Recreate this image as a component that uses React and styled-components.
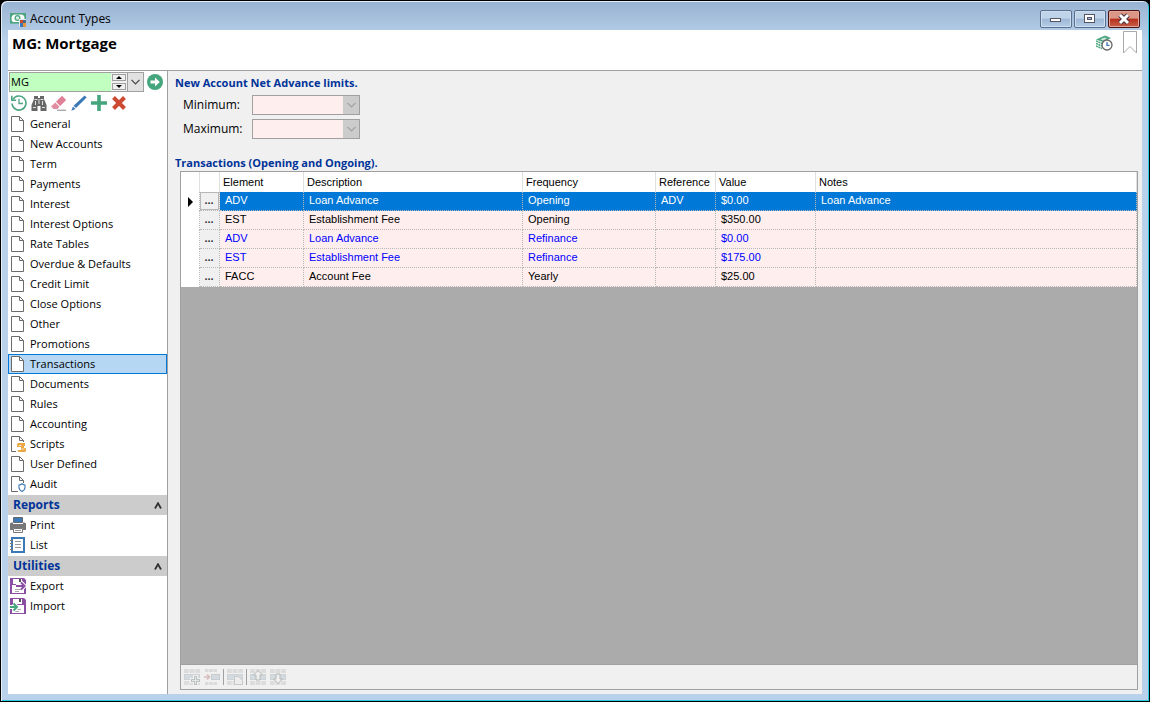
import React from 'react';
import styled, { createGlobalStyle } from 'styled-components';

const pages = [
  'General', 'New Accounts', 'Term', 'Payments', 'Interest', 'Interest Options',
  'Rate Tables', 'Overdue & Defaults', 'Credit Limit', 'Close Options', 'Other',
  'Promotions', 'Transactions', 'Documents', 'Rules', 'Accounting', 'Scripts',
  'User Defined', 'Audit',
];

const transactions = [
  { element: 'ADV', description: 'Loan Advance', frequency: 'Opening', reference: 'ADV', value: '$0.00', notes: 'Loan Advance', selected: true },
  { element: 'EST', description: 'Establishment Fee', frequency: 'Opening', value: '$350.00' },
  { element: 'ADV', description: 'Loan Advance', frequency: 'Refinance', value: '$0.00', linked: true },
  { element: 'EST', description: 'Establishment Fee', frequency: 'Refinance', value: '$175.00', linked: true },
  { element: 'FACC', description: 'Account Fee', frequency: 'Yearly', value: '$25.00' },
];

export default function App() {
  return (
    <>
      <GlobalStyle />
      <Window>
        <TitleBar>
          <MoneyIcon />
          <TitleText>Account Types</TitleText>
          <WindowButton aria-label='Minimise'>
            <svg width='12' height='12' viewBox='0 0 12 12'><rect x='.5' y='5.5' width='10' height='3' fill='#fff' stroke='#556' /></svg>
          </WindowButton>
          <WindowButton aria-label='Maximise'>
            <svg width='12' height='12' viewBox='0 0 12 12'>
              <rect x='.5' y='1.5' width='10' height='8' fill='#fff' stroke='#556' />
              <rect x='3.5' y='4.5' width='4' height='2' fill='#9fb9d6' stroke='#556' />
            </svg>
          </WindowButton>
          <WindowButton $close aria-label='Close'>
            <svg width='14' height='12' viewBox='0 0 14 12'>
              <path d='M3 2l8 8M11 2l-8 8' stroke='#4a3540' strokeWidth='5' />
              <path d='M3 2l8 8M11 2l-8 8' stroke='#fff' strokeWidth='3' />
            </svg>
          </WindowButton>
        </TitleBar>

        <Client>
          <Header>
            <h1>MG: Mortgage</h1>
            <HeaderButton aria-label='Pending transactions'><StackClockIcon /></HeaderButton>
            <HeaderButton aria-label='Bookmark'>
              <svg width='16' height='24' viewBox='0 0 16 24'><path d='M1.5 .5h13v21.5l-6.5-6.5l-6.5 6.5z' fill='#fff' stroke='#a9a9a9' /></svg>
            </HeaderButton>
          </Header>

          <Body>
            <Sidebar>
              <Lookup>
                <LookupBox>
                  <input aria-label='Account type' defaultValue='MG' />
                  <Spinner>
                    <button aria-label='Previous'><Triangle d='M3 0L6 3H0z' /></button>
                    <button aria-label='Next'><Triangle d='M0 0h6L3 3z' /></button>
                  </Spinner>
                  <DropButton aria-label='Open list'><Chevron color='#444' /></DropButton>
                </LookupBox>
                <IconButton aria-label='Go'>
                  <svg width='16' height='16' viewBox='0 0 16 16'>
                    <circle cx='8' cy='8' r='8' fill='#45a57d' />
                    <path d='M3.5 6.5H8V3.6L12.8 8L8 12.4V9.5H3.5z' fill='#fff' />
                  </svg>
                </IconButton>
              </Lookup>

              <Tools>
                <IconButton aria-label='History'>
                  <svg width='16' height='16' viewBox='0 0 16 16' fill='none' stroke='#4ca580' strokeWidth='1.6'>
                    <path d='M2 4.4A7 7 0 1 1 1 8.5' /><path d='M.8 .8v4.4h4.4' /><path d='M8 3.8v4.7h4' strokeWidth='1.3' />
                  </svg>
                </IconButton>
                <IconButton aria-label='Find'>
                  <svg width='16' height='16' viewBox='0 0 16 16'>
                    <path d='M3 1h4v2h2V1h4v3l2.5 6v6h-6v-5h-3v5h-6v-6L3 4z' fill='#676767' />
                    <path d='M3.5 4.5h3M9.5 4.5h3M4.5 6v4M11.5 6v4M2 12.5h3M11 12.5h3M8 4v5' stroke='#fff' strokeWidth='.8' />
                  </svg>
                </IconButton>
                <IconButton aria-label='Clear'>
                  <svg width='16' height='16' viewBox='0 0 16 16'>
                    <path d='M11 .8l4.2 4.2l-6 6L5 6.8z' fill='#df8096' /><path d='M4.3 7.5l4.2 4.2l-2 2.3H2.5L0 11.5z' fill='#e18ca0' />
                    <path d='M6 15.2h9' stroke='#888' />
                  </svg>
                </IconButton>
                <IconButton aria-label='Edit'>
                  <svg width='16' height='16' viewBox='0 0 16 16'>
                    <path d='M13.6 .5l2 2L5 13l-2.4-2.2z' fill='#3b78b8' /><path d='M2 11.5l2.5 2.4L.3 15.7z' fill='#3b78b8' />
                  </svg>
                </IconButton>
                <IconButton aria-label='Add'>
                  <svg width='16' height='16' viewBox='0 0 16 16'><path d='M8 0v16M0 8h16' stroke='#45a57d' strokeWidth='3.6' /></svg>
                </IconButton>
                <IconButton aria-label='Delete'>
                  <svg width='16' height='16' viewBox='0 0 16 16'><path d='M2.5 2.5l11 11M13.5 2.5l-11 11' stroke='#cb4a31' strokeWidth='4' /></svg>
                </IconButton>
              </Tools>

              <nav>
                {pages.map((page) => (
                  <NavItem key={page} href={'#' + page} $active={page === 'Transactions'}>
                    <PageIcon badge={page} />{page}
                  </NavItem>
                ))}
                <GroupHeading>Reports<Caret /></GroupHeading>
                <NavItem href='#print'><PrintIcon />Print</NavItem>
                <NavItem href='#list'><ListIcon />List</NavItem>
                <GroupHeading>Utilities<Caret /></GroupHeading>
                <NavItem href='#export'><DiskIcon arrow='#8a4fa3' d='M6 8h8.500M11 4.500L14.500 8L11 11.500' />Export</NavItem>
                <NavItem href='#import'><DiskIcon arrow='#45a57d' d='M0 9h7M3.500 5.500L7 9l-3.500 3.500' />Import</NavItem>
              </nav>
            </Sidebar>

            <Main>
              <h2>New Account Net Advance limits.</h2>
              <Limits>
                <Limit id='minimum' label='Minimum:' />
                <Limit id='maximum' label='Maximum:' />
              </Limits>
              <h2>Transactions (Opening and Ongoing).</h2>
              <GridPanel>
                <Grid>
                  <colgroup>
                    {[19, 20, 84, 219, 133, 60, 100].map((width, i) => <Column key={i} $width={width} />)}
                    <col />
                  </colgroup>
                  <thead>
                    <tr>
                      <th /><th />
                      <th>Element</th><th>Description</th><th>Frequency</th>
                      <th>Reference</th><th>Value</th><th>Notes</th>
                    </tr>
                  </thead>
                  <tbody>
                    {transactions.map((row, i) => (
                      <Row key={i} $selected={row.selected} $linked={row.linked}>
                        <Marker>
                          {row.selected && <svg width='5' height='10' viewBox='0 0 5 10'><path d='M0 0l5 5l-5 5z' /></svg>}
                        </Marker>
                        <MoreCell $selected={row.selected}><button aria-label='Details'>...</button></MoreCell>
                        <td>{row.element}</td>
                        <td>{row.description}</td>
                        <td>{row.frequency}</td>
                        <td>{row.reference}</td>
                        <td>{row.value}</td>
                        <td>{row.notes}</td>
                      </Row>
                    ))}
                  </tbody>
                </Grid>
                <GridTools>
                  <ToolGroup>
                    <IconButton disabled aria-label='Add row'>
                      <RowsIcon>
                        <path d='M11.500 6v10M6 11.500h10' stroke='#f0f0f0' strokeWidth='5' />
                        <path d='M11.500 7v9M7 11.500h9' stroke='#bcc2c2' strokeWidth='3' />
                        <path d='M11.500 8v7M8 11.500h7' stroke='#e4e6e6' />
                      </RowsIcon>
                    </IconButton>
                    <IconButton disabled aria-label='Insert row'>
                      <svg width='16' height='16' viewBox='0 0 16 16'>
                        <path d='M1 1.500h12M1 14.500h12' stroke='#dadada' strokeWidth='3' strokeDasharray='3.500 .8' />
                        <rect x='7.500' y='5.500' width='8' height='5' fill='#d3dbe0' stroke='#c6ccd0' />
                        <path d='M0 8h5M3 5.500L5.500 8L3 10.500' stroke='#d9bcbc' strokeWidth='1.600' fill='none' />
                      </svg>
                    </IconButton>
                  </ToolGroup>
                  <ToolGroup>
                    <IconButton disabled aria-label='Copy row'>
                      <RowsIcon><path d='M7.500 7.500h4l4 4v4h-8z' fill='#ececec' stroke='#c8c8c8' /></RowsIcon>
                    </IconButton>
                  </ToolGroup>
                  <ToolGroup>
                    <IconButton disabled aria-label='Move up'>
                      <RowsIcon><path d='M8 1.500L12.500 6H10v5H6V6H3.500z' fill='#f0f0f0' stroke='#b4b8b8' /></RowsIcon>
                    </IconButton>
                    <IconButton disabled aria-label='Move down'>
                      <RowsIcon><path d='M8 14.500L3.500 10H6V5h4v5h2.500z' fill='#f0f0f0' stroke='#b4b8b8' /></RowsIcon>
                    </IconButton>
                  </ToolGroup>
                </GridTools>
              </GridPanel>
            </Main>
          </Body>
        </Client>
      </Window>
    </>
  );
}

function Limit({ id, label }) {
  return (
    <>
      <label htmlFor={id}>{label}</label>
      <SelectBox>
        <select id={id} disabled><option></option></select>
        <span><Chevron color='#a0a0a0' /></span>
      </SelectBox>
    </>
  );
}

function Chevron({ color }) {
  return <svg width='9' height='6' viewBox='0 0 9 6'><path d='M.5 .8l4 4l4-4' fill='none' stroke={color} strokeWidth='1.2' /></svg>;
}

function Triangle({ d }) {
  return <svg width='6' height='3' viewBox='0 0 6 3'><path d={d} /></svg>;
}

function Caret() {
  return <svg width='8' height='7' viewBox='0 0 8 7'><path d='M1 6.500L4 1.200L7 6.500' fill='none' stroke='#333' strokeWidth='1.800' /></svg>;
}

function MoneyIcon() {
  return (
    <svg width='16' height='16' viewBox='0 0 16 16'>
      <rect x='.8' y='2.800' width='14.400' height='9' fill='#fff' stroke='#4ca580' strokeWidth='1.600' />
      <path d='M1 3h3L1 6zM15 3h-3l3 3zM1 12h3L1 9z' fill='#4ca580' />
      <circle cx='7.500' cy='7' r='2.400' fill='#d6eee3' stroke='#4ca580' strokeWidth='1.300' />
      <path d='M9 8h7v8H9z' fill='#dfe8f0' />
      <path d='M10 9h3v3h-3z' fill='#c84a2c' />
      <path d='M10 12h3v4h-3z' fill='#3b78b8' /><path d='M13 9h3v3h-3z' fill='#4a6a8c' />
      <path d='M13 12h3v4h-3z' fill='#e8943c' />
    </svg>
  );
}

function StackClockIcon() {
  return (
    <svg width='17' height='16' viewBox='0 0 17 16'>
      <path d='M0 4.500L9 .5l6 2.500L7 7z' fill='#4ca580' />
      <path d='M4.500 4.200l4-1.700l2.500 1.200l-4 1.700z' fill='#cfe8dc' />
      <path d='M0 6l6 2.500M0 8.500L6 11M0 11l6 2.500' stroke='#4ca580' strokeWidth='1.500' strokeDasharray='2 .6' />
      <circle cx='11' cy='10' r='5' fill='#fff' stroke='#666' strokeWidth='1.300' />
      <path d='M11 7v3.300h2.500' fill='none' stroke='#3b78b8' strokeWidth='1.300' />
    </svg>
  );
}

function PageIcon({ badge }) {
  return (
    <svg width='16' height='16' viewBox='0 0 16 16'>
      <path d='M1.500 .5h8l4 4v11h-12z' fill='#fff' stroke='#6b6b6b' />
      <path d='M9.500 .5v4h4' fill='none' stroke='#6b6b6b' />
      {badge === 'Scripts' && (
        <>
          <path d='M6 6h10v10H6z' fill='#fff' />
          <path d='M8.500 7H15v3h-1v2h2v2.500q0 1.500-1.500 1.500H9q-1.500 0-1.500-2H11v-3H7V8.500Q7 7 8.500 7z' fill='#e8a844' />
          <path d='M8.500 9.500h3M11.500 13h3' stroke='#fff' strokeWidth='.7' />
        </>
      )}
      {badge === 'Audit' && (
        <>
          <path d='M8 7h8v9H8z' fill='#fff' />
          <path d='M9 9q1.500 0 3-1.200q1.500 1.200 3 1.200v2.500q0 2.500-3 4q-3-1.500-3-4z' fill='#fff' stroke='#3b78b8' strokeWidth='1.100' />
        </>
      )}
    </svg>
  );
}

function PrintIcon() {
  return (
    <svg width='16' height='16' viewBox='0 0 16 16'>
      <path d='M3.500 .5h9v5h-9z' fill='#3b78b8' stroke='#666' />
      <path d='M0 7q0-1.500 1.500-1.500H3V7h10V5.500h1.500Q16 5.500 16 7v6h-3v-2H3v2H0z' fill='#777' />
      <path d='M3.500 11.500h9v4h-9z' fill='#fff' stroke='#777' />
      <path d='M5 13.500h6' stroke='#999' />
    </svg>
  );
}

function ListIcon() {
  return (
    <svg width='16' height='16' viewBox='0 0 16 16'>
      <path d='M2 1h12v14H2z' fill='#fff' stroke='#3b78b8' strokeWidth='2' />
      <path d='M0 3.500h3M0 6.500h3M0 9.500h3M0 12.500h3' stroke='#777' />
      <path d='M5 4.500h6M5 7.500h6M5 10.500h6' stroke='#999' />
    </svg>
  );
}

function DiskIcon({ arrow, d }) {
  return (
    <svg width='16' height='16' viewBox='0 0 16 16'>
      <path d='M0 0h14l2 2v14H0z' fill='#8a4fa3' />
      <path d='M3 1h9v5H3zM2 7h12v8H2z' fill='#fff' />
      <path d='M9 1h2v3H9z' fill='#555' />
      <path d='M5 11.500h6M5 13.500h4' stroke='#aaa' />
      <path d={d} fill='none' stroke='#fff' strokeWidth='4' />
      <path d={d} fill='none' stroke={arrow} strokeWidth='2' />
    </svg>
  );
}

function RowsIcon({ children }) {
  return (
    <svg width='16' height='16' viewBox='0 0 16 16'>
      <path d='M0 2h16M0 14h16' stroke='#dcdcdc' strokeWidth='4' strokeDasharray='4.800 .8' />
      <rect x='.5' y='5.500' width='15' height='5' fill='#d3dbe0' stroke='#cdd2d5' />
      {children}
    </svg>
  );
}

const GlobalStyle = createGlobalStyle`
  * { box-sizing: border-box; }
  body {
    margin: 0;
    background: #000;
    color: #000;
    font: 12px/16px "Open Sans", "Noto Sans", sans-serif;
  }
  button, input, select { font: inherit; color: inherit; margin: 0; }
  svg { flex: none; display: block; }
`;

const Window = styled.div`
  display: flex;
  flex-direction: column;
  min-height: 100vh;
  padding: 0 7px 7px;
  border: 1px solid #000;
  border-radius: 7px 7px 0 0;
  background: linear-gradient(#98b3d2, #b9d1ea 40px);
  box-shadow: inset 1px 1px #e4eef8, inset -1px -1px #25cfe0;
`;

const TitleBar = styled.header`
  display: flex;
  align-items: center;
  gap: 2px;
  height: 29px;
  padding: 7px 2px 0;
`;

const TitleText = styled.span`
  flex: 1;
  padding-left: 2px;
`;

const WindowButton = styled.button`
  display: flex;
  align-items: center;
  justify-content: center;
  width: 32px;
  height: 18px;
  padding: 0;
  border: 1px solid ${({ $close }) => ($close ? '#4c1212' : '#58708f')};
  border-radius: 2px;
  box-shadow: inset 0 0 0 1px ${({ $close }) => ($close ? '#e0a79c' : '#d0dfef')};
  background: ${({ $close }) => ($close
    ? 'linear-gradient(#dc9686 45%, #b7301c 50%, #c8604a)'
    : 'linear-gradient(#bfd3e9 45%, #9db8d6 50%, #b4cce6)')};
`;

const Client = styled.div`
  flex: 1;
  display: flex;
  flex-direction: column;
  background: #f0f0f0;
`;

const Header = styled.div`
  display: flex;
  align-items: flex-start;
  gap: 9px;
  height: 41px;
  padding: 0 4px;
  border-bottom: 1px solid #a0a0a0;
  background: #fff;

  h1 {
    flex: 1;
    margin: 0;
    font: bold 15px/26px "Open Sans", sans-serif;
  }
`;

const HeaderButton = styled.button`
  display: flex;
  align-items: center;
  height: 26px;
  padding: 0;
  border: 0;
  background: none;
`;

const Body = styled.div`
  flex: 1;
  display: flex;
`;

const Sidebar = styled.aside`
  flex: none;
  width: 160px;
  padding-top: 1px;
  border-right: 1px solid #a0a0a0;
  background: #fff;
  font-size: 11px;
`;

const Lookup = styled.div`
  display: flex;
  align-items: center;
  gap: 3px;
  padding-left: 1px;
`;

const LookupBox = styled.div`
  display: flex;
  width: 135px;
  height: 20px;
  border: 1px solid #a0a0a0;
  background: #c0ffc0;

  input {
    flex: 1;
    min-width: 0;
    padding: 0 1px;
    border: 0;
    background: none;
  }
`;

const Spinner = styled.div`
  display: grid;
  gap: 2px;
  width: 16px;
  padding: 1px;
  background: #f0f0f0;

  button {
    display: flex;
    align-items: center;
    justify-content: center;
    padding: 0;
    border: 1px solid #a0a0a0;
    background: #f0f0f0;
  }
`;

const DropButton = styled.button`
  display: flex;
  align-items: center;
  justify-content: center;
  width: 16px;
  padding: 0;
  border: 0;
  border-left: 1px solid #a0a0a0;
  background: #e1e1e1;
`;

const IconButton = styled.button`
  padding: 0;
  border: 0;
  background: none;
`;

const Tools = styled.div`
  display: flex;
  gap: 4px;
  padding: 3px 3px;
`;

const NavItem = styled.a`
  display: flex;
  align-items: center;
  gap: 4px;
  height: 20px;
  padding-left: 1px;
  border: 1px solid ${({ $active }) => ($active ? '#0078d7' : 'transparent')};
  background: ${({ $active }) => ($active ? '#b5d7f3' : 'none')};
  color: #000;
  text-decoration: none;
`;

const GroupHeading = styled.div`
  display: flex;
  align-items: center;
  justify-content: space-between;
  height: 20px;
  margin-top: 1px;
  padding: 0 5px;
  background: #ccc;
  color: #003399;
  font: bold 12px/16px "Open Sans", sans-serif;
`;

const Main = styled.main`
  flex: 1;
  display: flex;
  flex-direction: column;
  min-width: 0;
  padding: 4px 4px 4px 7px;

  h2 {
    margin: 0;
    color: #003399;
    font: bold 11px/16px "Open Sans", sans-serif;
  }
`;

const Limits = styled.div`
  display: grid;
  grid-template-columns: 69px 108px;
  row-gap: 4px;
  align-items: center;
  padding: 4px 0 16px 8px;
`;

const SelectBox = styled.div`
  display: grid;
  grid-template-columns: 1fr 16px;
  height: 20px;
  border: 1px solid #a0a0a0;
  background: #ffeeee;

  select {
    grid-area: 1 / 1 / 2 / 3;
    border: 0;
    appearance: none;
    background: none;
  }

  span {
    grid-area: 1 / 2;
    display: flex;
    align-items: center;
    justify-content: center;
    background: #ccc;
    pointer-events: none;
  }
`;

const GridPanel = styled.div`
  flex: 1;
  display: flex;
  flex-direction: column;
  justify-content: space-between;
  margin-left: 5px;
  border: 1px solid #a0a0a0;
  background: #ababab;
`;

const Column = styled.col`
  width: ${({ $width }) => $width}px;
`;

const Grid = styled.table`
  width: 100%;
  table-layout: fixed;
  border-spacing: 0;
  font: 11px/16px "Liberation Sans", Arial, sans-serif;

  th {
    height: 20px;
    padding: 0 3px;
    border-right: 1px solid #e0e0e0;
    background: #fff;
    font-weight: normal;
    text-align: left;
    white-space: nowrap;
  }

  td {
    height: 19px;
    padding: 0 5px 2px;
    border-right: 1px dotted #b8b8b8;
    border-bottom: 1px dotted #b8b8b8;
    white-space: nowrap;
  }
`;

const Row = styled.tr`
  background: ${({ $selected }) => ($selected ? '#0078d7' : '#ffeeee')};
  color: ${({ $selected, $linked }) => ($selected ? '#fff' : $linked ? '#0000ff' : '#000')};
`;

const Marker = styled.td`
  && {
    padding: 0 0 0 7px;
    border-bottom: 0;
    background: #fff;
  }
`;

const MoreCell = styled.td`
  && {
    padding: 0;
    background: #f0f0f0;
  }

  button {
    display: block;
    width: 100%;
    height: 18px;
    padding: 0 1px 2px 0;
    border: 1px solid ${({ $selected }) => ($selected ? '#b8b8b8' : 'transparent')};
    background: none;
    color: #333;
    font-weight: bold;
    line-height: 14px;
  }
`;

const GridTools = styled.div`
  display: flex;
  align-items: center;
  height: 25px;
  border-top: 1px solid #a0a0a0;
  background: #f0f0f0;
`;

const ToolGroup = styled.div`
  display: flex;
  gap: 4px;
  padding: 0 3px;

  & + & {
    border-left: 1px solid #a0a0a0;
  }
`;
